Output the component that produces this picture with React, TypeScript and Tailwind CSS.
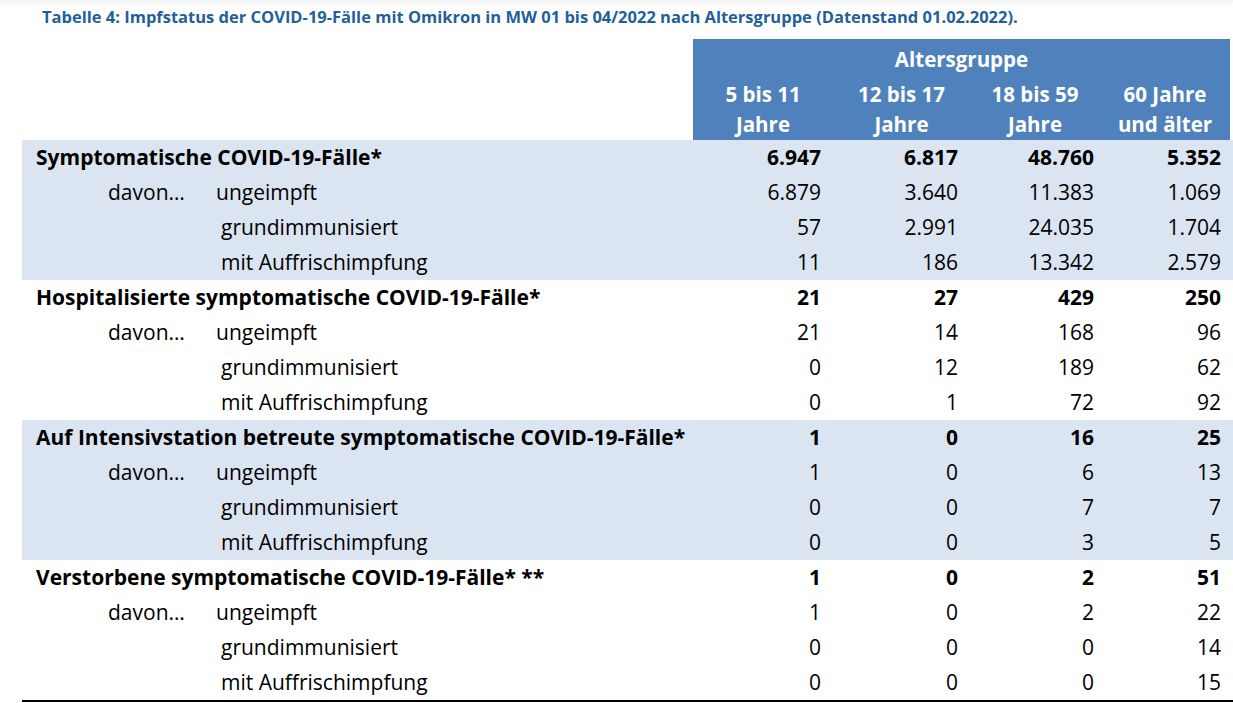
const groups = [
  {
    label: 'Symptomatische COVID-19-Fälle*',
    totals: ['6.947', '6.817', '48.760', '5.352'],
    rows: [
      ['6.879', '3.640', '11.383', '1.069'],
      ['57', '2.991', '24.035', '1.704'],
      ['11', '186', '13.342', '2.579'],
    ],
    shaded: true,
  },
  {
    label: 'Hospitalisierte symptomatische COVID-19-Fälle*',
    totals: ['21', '27', '429', '250'],
    rows: [
      ['21', '14', '168', '96'],
      ['0', '12', '189', '62'],
      ['0', '1', '72', '92'],
    ],
    shaded: false,
  },
  {
    label: 'Auf Intensivstation betreute symptomatische COVID-19-Fälle*',
    totals: ['1', '0', '16', '25'],
    rows: [
      ['1', '0', '6', '13'],
      ['0', '0', '7', '7'],
      ['0', '0', '3', '5'],
    ],
    shaded: true,
  },
  {
    label: 'Verstorbene symptomatische COVID-19-Fälle* **',
    totals: ['1', '0', '2', '51'],
    rows: [
      ['1', '0', '2', '22'],
      ['0', '0', '0', '14'],
      ['0', '0', '0', '15'],
    ],
    shaded: false,
  },
];

const subLabels = ['ungeimpft', 'grundimmunisiert', 'mit Auffrischimpfung'];
const cols = 'grid grid-cols-[671px_140px_137px_130px_133px]';
const numPad = ['pr-[12px]', 'pr-[12px]', 'pr-[6px]', 'pr-[12px]'];

function Numbers({ values, bold }: { values: string[]; bold?: boolean }) {
  return (
    <>
      {values.map((v, i) => (
        <div key={i} className={`text-right ${numPad[i]} ${bold ? 'font-bold' : ''}`}>
          {v}
        </div>
      ))}
    </>
  );
}

export default function App() {
  return (
    <div
      className="w-[1233px] h-[703px] overflow-hidden bg-white text-black"
      style={{ fontFamily: '"Open Sans", Lato, sans-serif' }}
    >
      <div className="h-[34px] whitespace-nowrap bg-gradient-to-b from-gray-100 to-white to-[20%] pl-[42px] pt-[8px] text-[16.5px] font-bold leading-[18px] text-[#22609c]">
        Tabelle 4: Impfstatus der COVID-19-Fälle mit Omikron in MW 01 bis 04/2022 nach Altersgruppe (Datenstand 01.02.2022).
      </div>

      <div className="pl-[22px]">
        {/* header */}
        <div className={`${cols} mt-[5px]`}>
          <div />
          <div className="col-span-4 mr-[3px] bg-[#4f81bd] pb-[1px] text-[20.5px] font-bold text-white">
            <div className="flex h-[40px] items-center justify-center">Altersgruppe</div>
            <div className="grid grid-cols-[140px_137px_130px_130px] text-center leading-[30px]">
              <div>5 bis 11<br />Jahre</div>
              <div>12 bis 17<br />Jahre</div>
              <div>18 bis 59<br />Jahre</div>
              <div>60 Jahre<br />und älter</div>
            </div>
          </div>
        </div>

        {/* body */}
        <div className="border-b-2 border-black text-[21px]">
          {groups.map((g) => (
            <div key={g.label} className={g.shaded ? 'bg-[#dbe4f1]' : 'bg-white'}>
              <div className={`${cols} h-[35px] items-center font-bold`}>
                <div className="whitespace-nowrap pl-[14px]">{g.label}</div>
                <Numbers values={g.totals} bold />
              </div>
              {g.rows.map((r, i) => (
                <div key={i} className={`${cols} h-[35px] items-center`}>
                  <div className="flex">
                    <span className="w-[194px] pl-[86px]">{i === 0 ? 'davon…' : ''}</span>
                    <span className={i === 0 ? '' : 'pl-[5px]'}>{subLabels[i]}</span>
                  </div>
                  <Numbers values={r} />
                </div>
              ))}
            </div>
          ))}
        </div>
      </div>
    </div>
  );
}
